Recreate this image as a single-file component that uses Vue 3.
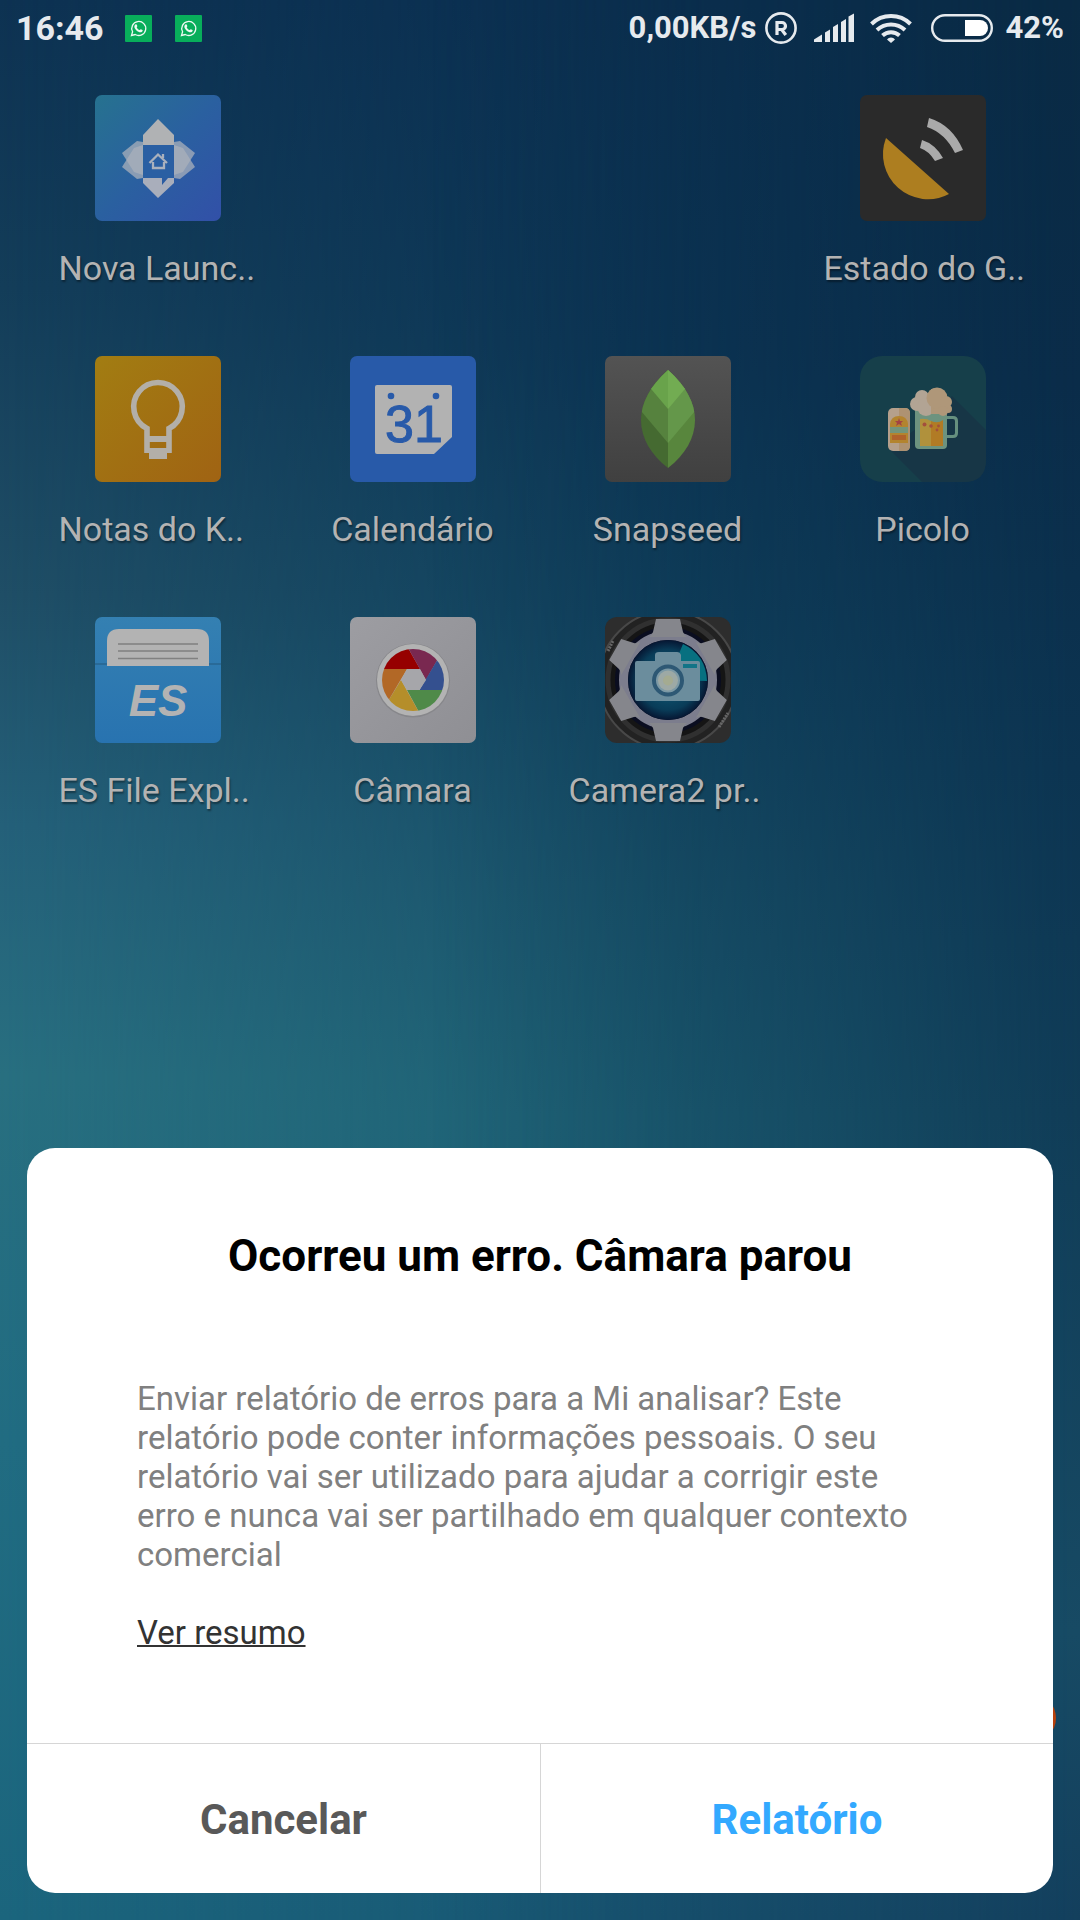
<template>
  <div class="screen">
    <header class="status-bar">
      <span class="clock">{{ clock }}</span>
      <svg v-for="n in 2" :key="n" class="notification" viewBox="0 0 27 27" aria-hidden="true">
        <rect width="27" height="27" rx="1" fill="#08ae5b" />
        <path d="M6.5 20.5 L7.6 16.8 A7 7 0 1 1 10.2 19.5 Z" fill="none" stroke="#eef8f2" stroke-width="1.3" />
        <path d="M10.4 9.4 C11.2 8.8 11.8 9.4 12.3 10.9 C12.4 11.5 11.7 11.8 11.7 12.2 C12.2 13.4 13.3 14.6 14.7 15.1 C15.2 15 15.5 14.2 16 14.3 C17.5 15 17.9 15.3 17.6 16 C17 17.5 15.2 17.7 13.4 16.8 C11.4 15.8 9.9 14 9.4 12.2 C9.2 11 9.6 10 10.4 9.4 Z" fill="#eef8f2" />
      </svg>
      <span class="speed">{{ speed }}</span>
      <svg class="roaming" viewBox="0 0 32 32" aria-hidden="true">
        <circle cx="16" cy="16" r="14.6" fill="none" stroke="#e6eaee" stroke-width="2.6" />
        <path d="M12 23 V10.500 H17 A3.500 3.500 0 0 1 17 17.500 H12 M16.600 17.500 L20.800 23" fill="none" stroke="#e6eaee" stroke-width="3.200" />
      </svg>
      <svg class="signal" viewBox="0 0 40 30" fill="#e6eaee" aria-hidden="true">
        <path d="M0 29 V26.5 L8 21.5 V29 Z" />
        <path d="M11 29 V19.5 L16 16.5 V29 Z" />
        <path d="M19 29 V14 L24 11 V29 Z" />
        <path d="M27 29 V9 L32 6 V29 Z" />
        <path d="M34.5 29 V3.5 L40 0.5 V29 Z" />
      </svg>
      <svg class="wifi" viewBox="0 0 42 30" aria-hidden="true">
        <g fill="none" stroke="#e6eaee" stroke-width="4">
          <path d="M1.5 11 A28 28 0 0 1 40.5 11" />
          <path d="M7 17 A20.5 20.5 0 0 1 35 17" />
          <path d="M12.5 22.5 A12.5 12.5 0 0 1 29.5 22.5" />
        </g>
        <path d="M17 26.5 A5 5 0 0 1 25 26.5 L21 30 Z" fill="#e6eaee" />
      </svg>
      <svg class="battery" viewBox="0 0 62 28" aria-hidden="true">
        <rect x="1.2" y="1.2" width="59.6" height="25.6" rx="12.8" fill="none" stroke="#e6eaee" stroke-width="2.4" />
        <path d="M34 6 H49 A8 8 0 0 1 49 22 H34 Z" fill="#fff" />
      </svg>
      <span class="percent">{{ battery }}</span>
    </header>

    <main class="apps">
      <button v-for="app in apps" :key="app.id" type="button" class="app" :class="{ last: app.lastColumn }">
        <svg class="icon" viewBox="0 0 126 126" aria-hidden="true">
          <template v-if="app.id === 'nova'">
            <defs>
              <linearGradient id="novaBg" x1="0" y1="0" x2="1" y2="1">
                <stop offset="0" stop-color="#26728f" />
                <stop offset="0.5" stop-color="#2a60a0" />
                <stop offset="1" stop-color="#3250a8" />
              </linearGradient>
            </defs>
            <rect width="126" height="126" rx="7" fill="url(#novaBg)" />
            <g fill="#a9b0bb" fill-opacity="0.75">
              <path d="M48 47 L42 46 L27 58 L39 77 L48 80 Z" />
              <path d="M48 83 L42 84 L27 72 L39 53 L48 50 Z" />
              <path d="M79 47 L85 46 L100 58 L88 77 L79 80 Z" />
              <path d="M79 83 L85 84 L100 72 L88 53 L79 50 Z" />
            </g>
            <path d="M63 24 L79 40 V50 H48 V40 Z" fill="#b0b2b4" />
            <path d="M48 83 H67 V90 L73 83 H79 V88 L63 103 L48 88 Z" fill="#a9aebb" />
            <rect x="49" y="50" width="29" height="33" fill="#2a5fa3" />
            <path d="M54.5 68 L63 59.5 L72 68 M68 63 V59 M58 67 V73 H69 V67" fill="none" stroke="#aab1bd" stroke-width="2.3" />
          </template>

          <template v-else-if="app.id === 'gps'">
            <rect width="126" height="126" rx="7" fill="#2a2a2a" />
            <path d="M26 43 A45 45 0 0 0 89 99 Z" fill="#ad7e20" />
            <path d="M69 23 Q92 30 103 55 L95 58 Q85 38 67 32 Z" fill="#aaa" />
            <path d="M62 45 Q75 49 83 63 L75 66 Q69 56 60 53 Z" fill="#aaa" />
          </template>

          <template v-else-if="app.id === 'keep'">
            <defs>
              <linearGradient id="keepBg" x1="0" y1="0" x2="1" y2="1">
                <stop offset="0" stop-color="#a27d12" />
                <stop offset="1" stop-color="#a06313" />
              </linearGradient>
            </defs>
            <rect width="126" height="126" rx="7" fill="url(#keepBg)" />
            <path d="M52 97 V72.5 A24.3 24.3 0 1 1 74 72.5 V97" fill="none" stroke="#b3afa8" stroke-width="5.6" />
            <path d="M50 80 H76 V86 H50 Z M50 92 H76 V97 H72 V103 H54 V97 H50 Z" fill="#b3afa8" />
          </template>

          <template v-else-if="app.id === 'calendar'">
            <rect width="126" height="126" rx="7" fill="#285aa9" />
            <path d="M27 29 H100 Q102 29 102 31 V81 L84 98 H27 Q25 98 25 96 V31 Q25 29 27 29 Z" fill="#b2b2b2" />
            <circle cx="41" cy="40" r="3.3" fill="#285aa9" />
            <circle cx="86" cy="40" r="3.3" fill="#285aa9" />
            <text x="64" y="86" class="day">31</text>
          </template>

          <template v-else-if="app.id === 'snapseed'">
            <defs>
              <linearGradient id="snapBg" x1="0" y1="0" x2="0" y2="1">
                <stop offset="0" stop-color="#535353" />
                <stop offset="1" stop-color="#404040" />
              </linearGradient>
              <clipPath id="leaf">
                <path d="M63 14 C45 30 36 47 36 64 C36 82 46 99 63 112 C80 99 90 82 90 64 C90 47 81 30 63 14 Z" />
              </clipPath>
            </defs>
            <rect width="126" height="126" rx="7" fill="url(#snapBg)" />
            <g clip-path="url(#leaf)">
              <rect x="36" y="14" width="27" height="98" fill="#456a31" />
              <rect x="63" y="14" width="27" height="98" fill="#58863d" />
              <path d="M36 10 H63 V87 L36 55 Z" fill="#56823e" />
              <path d="M90 10 H63 V87 L90 55 Z" fill="#64974a" />
              <path d="M36 10 H63 V53 L36 21 Z" fill="#69a34b" />
              <path d="M90 10 H63 V53 L90 21 Z" fill="#72ac52" />
            </g>
          </template>

          <template v-else-if="app.id === 'picolo'">
            <rect width="126" height="126" rx="22" fill="#163f4a" />
            <path d="M92 40 L126 74 V104 Q126 126 104 126 H62 L29 93 L60 70 Z" fill="#173646" />
            <rect x="28" y="52" width="22" height="43" rx="5" fill="#b5a08c" />
            <path d="M39 52 H45 Q50 52 50 57 V90 Q50 95 45 95 H39 Z" fill="#ae9272" />
            <path d="M30 87 V68 Q31 60 39 60 Q47 60 48 68 V87 Z" fill="#b3842f" />
            <path d="M30 71 H48 V77 H30 Z" fill="#74947a" />
            <path d="M32 79 H46 V84 H32 Z" fill="#b0622b" />
            <path d="M39 62 L40 65 H43 L41 67 L42 70 L39 68 L36 70 L37 67 L35 65 H38 Z" fill="#a34343" />
            <path d="M87 61.5 H93 Q96.5 61.5 96.5 65 V77 Q96.5 80.5 93 80.5 H87" fill="none" stroke="#66907f" stroke-width="3" />
            <path d="M55 54 H87 V89 Q87 93 83 93 H59 Q55 93 55 89 Z" fill="#6d937f" />
            <path d="M60 63 Q66 62 71 65 V90 H60 Z" fill="#b0913c" />
            <path d="M71 65 Q78 68 83 64 V90 H71 Z" fill="#b17b25" />
            <g fill="#a34f3c">
              <circle cx="64.5" cy="68.5" r="2" />
              <circle cx="71" cy="70" r="1.8" />
              <circle cx="78.5" cy="70" r="1.4" />
              <circle cx="77" cy="74" r="1.4" />
            </g>
            <g fill="#b2a494">
              <circle cx="57" cy="48" r="7" />
              <circle cx="62" cy="41" r="7" />
              <circle cx="66" cy="51" r="9" />
            </g>
            <g fill="#af9779">
              <path d="M71 33 H80 V58 H71 Z" />
              <circle cx="77" cy="42" r="10.5" />
              <circle cx="86" cy="46" r="6" />
              <circle cx="88" cy="53" r="4" />
              <circle cx="83" cy="55" r="5" />
            </g>
          </template>

          <template v-else-if="app.id === 'es'">
            <defs>
              <linearGradient id="esBg" x1="0" y1="0" x2="0" y2="1">
                <stop offset="0" stop-color="#3480b2" />
                <stop offset="1" stop-color="#2873b0" />
              </linearGradient>
            </defs>
            <rect width="126" height="126" rx="7" fill="url(#esBg)" />
            <rect y="46" width="126" height="2" fill="#296a98" />
            <path d="M12 49 V24 Q12 12 24 12 H102 Q114 12 114 24 V49 Z" fill="#b3b3b3" />
            <path d="M23 27 H103 M23 34 H103 M23 41.5 H103" stroke="#808080" stroke-width="1.6" />
            <text x="63" y="99" class="es">ES</text>
          </template>

          <template v-else-if="app.id === 'camera'">
            <defs>
              <linearGradient id="camBg" x1="0" y1="0" x2="1" y2="1">
                <stop offset="0" stop-color="#9d9da2" />
                <stop offset="1" stop-color="#8f8f94" />
              </linearGradient>
              <clipPath id="shutter">
                <circle cx="63" cy="63" r="31" />
              </clipPath>
            </defs>
            <rect width="126" height="126" rx="7" fill="url(#camBg)" />
            <circle cx="63" cy="63.5" r="37" fill="#87878b" />
            <circle cx="63" cy="63" r="36" fill="#b3b3b3" />
            <g clip-path="url(#shutter)">
              <path d="M30 52 H70 L57 29 L30 29 Z" fill="#960000" />
              <path d="M57 29 L76 63 L89 40 L80 25 Z" fill="#792850" />
              <path d="M89 40 L69.5 73 H98 V40 Z" fill="#34508f" />
              <path d="M98 73 H57 L70 97 H98 Z" fill="#4f8a49" />
              <path d="M70 97 L51 63 L37 86 L50 97 Z" fill="#b58e2a" />
              <path d="M37 86 L57 52 H28 V86 Z" fill="#b26826" />
            </g>
            <path d="M57 52 H70 L76 63 L69.5 73 H57 L51 63 Z" fill="#a6a6aa" />
          </template>

          <template v-else>
            <defs>
              <clipPath id="lensFrame">
                <rect width="126" height="126" rx="12" />
              </clipPath>
              <radialGradient id="lensGlass">
                <stop offset="0" stop-color="#12617d" />
                <stop offset="0.75" stop-color="#093c58" />
                <stop offset="1" stop-color="#061632" />
              </radialGradient>
            </defs>
            <g clip-path="url(#lensFrame)">
              <rect width="126" height="126" fill="#2d2d2d" />
              <circle cx="63" cy="63" r="69" fill="#222" stroke="#484848" stroke-width="2" />
              <circle cx="63" cy="63" r="60" fill="#151515" stroke="#303030" stroke-width="5" />
              <circle cx="63" cy="63" r="53" fill="#0a0d20" />
              <path d="M3 34 L8 24 M114 110 L123 96" stroke="#666" stroke-width="3" stroke-dasharray="2 1" />
              <circle cx="63" cy="63" r="44.5" fill="none" stroke="#7c7d8d" stroke-width="9" />
              <path v-for="angle in teeth" :key="angle" d="M51 2 H75 L78 15 Q79 18 82 20 H44 Q47 18 48 15 Z" fill="#85868c" :transform="`rotate(${angle} 63 63)`" />
              <circle cx="63" cy="63" r="40" fill="url(#lensGlass)" />
              <path d="M63 63 L78 27 Q101 38 102 64 Z" fill="#077080" />
              <path d="M32 44 H50 V38 Q50 35 54 35 H72 Q75 35 76 38 V44 H93 Q95 44 95 46 V82 Q95 84 93 84 H32 Q30 84 30 82 V46 Q30 44 32 44 Z" fill="#6b8d9d" />
              <rect x="78" y="47" width="14" height="4" fill="#127487" />
              <circle cx="63" cy="63.5" r="14" fill="#7c99a5" stroke="#2d5874" stroke-width="4" />
              <circle cx="63" cy="63.5" r="10" fill="#9da9a5" />
              <circle cx="63" cy="63.5" r="5" fill="#a4ab91" />
            </g>
          </template>
        </svg>
        <span class="label" :class="{ clipped: app.label.endsWith('..') }">{{ app.label }}</span>
      </button>
    </main>

    <div class="dialog-area">
      <span class="bubble"></span>
      <section class="dialog" role="alertdialog" aria-labelledby="dialog-title" aria-describedby="dialog-text">
        <div class="content">
          <h1 id="dialog-title">Ocorreu um erro. Câmara parou</h1>
          <p id="dialog-text">
            Enviar relatório de erros para a Mi analisar? Este relatório pode conter informações pessoais. O seu
            relatório vai ser utilizado para ajudar a corrigir este erro e nunca vai ser partilhado em qualquer
            contexto comercial
          </p>
          <a href="#">Ver resumo</a>
        </div>
        <div class="actions">
          <button type="button">Cancelar</button>
          <button type="button" class="primary">Relatório</button>
        </div>
      </section>
    </div>
  </div>
</template>

<script setup>
import { ref } from 'vue';

const clock = ref('16:46');
const speed = ref('0,00KB/s');
const battery = ref('42%');

const apps = [
  { id: 'nova', label: 'Nova Launc..' },
  { id: 'gps', label: 'Estado do G..', lastColumn: true },
  { id: 'keep', label: 'Notas do K..' },
  { id: 'calendar', label: 'Calendário' },
  { id: 'snapseed', label: 'Snapseed' },
  { id: 'picolo', label: 'Picolo' },
  { id: 'es', label: 'ES File Expl..' },
  { id: 'camera', label: 'Câmara' },
  { id: 'camera2', label: 'Camera2 pr..' },
];

// Rotation of each tooth on the Camera2 gear
const teeth = [0, 60, 120, 180, 240, 300];
</script>

<style>
body {
  margin: 0;
  background: #0c3153;
}
</style>

<style scoped>
.screen {
  position: relative;
  isolation: isolate;
  box-sizing: border-box;
  min-height: 100vh;
  padding-bottom: 27px;
  display: flex;
  flex-direction: column;
  font-family: Roboto, 'Liberation Sans', sans-serif;
  background: linear-gradient(#0b3052, #0c3656 18%, #10425e 32%, #19536a 46%, #1d6074 58%, #1b5c77 80%, #185673);
}

/* Wallpaper: lighter teal on the left edge, darker navy on the right */
.screen::before,
.screen::after {
  content: '';
  position: absolute;
  inset: 0;
  z-index: -1;
}

.screen::before {
  background: linear-gradient(#0d3252, #133d59 15%, #1f4e66 31%, #246079 43%, #286f80 56%, #216c82 75%, #1b657d);
  mask-image: linear-gradient(to right, #000, rgba(0, 0, 0, 0.6) 25%, transparent 65%);
}

.screen::after {
  background: linear-gradient(#092a44, #0a2c49 20%, #0c3451 40%, #103c57 58%, #174a64 85%, #133f5d);
  mask-image: linear-gradient(to left, #000, rgba(0, 0, 0, 0.6) 22%, transparent 60%);
}

.status-bar {
  display: flex;
  align-items: center;
  height: 56px;
  padding: 0 16px;
  color: #e6eaee;
  font-weight: 700;
  line-height: 40px;
}

.clock {
  margin-right: 21px;
  font-size: 34px;
}

.notification {
  width: 27px;
  height: 27px;
  margin-right: 23px;
}

.speed {
  margin-left: auto;
  font-size: 31px;
}

.roaming {
  width: 32px;
  height: 32px;
  margin-left: 8px;
}

.signal {
  width: 40px;
  height: 30px;
  margin-left: 17px;
}

.wifi {
  width: 42px;
  height: 30px;
  margin-left: 16px;
}

.battery {
  width: 62px;
  height: 28px;
  margin-left: 19px;
}

.percent {
  margin-left: 13px;
  font-size: 31px;
}

.apps {
  display: grid;
  grid-template-columns: repeat(4, 1fr);
  row-gap: 68px;
  padding: 39px 30px 60px;
}

.app {
  display: flex;
  flex-direction: column;
  align-items: center;
  gap: 27px;
  padding: 0;
  border: 0;
  background: none;
  font-family: inherit;
}

.app.last {
  grid-column: 4;
}

.icon {
  display: block;
  width: 126px;
  height: 126px;
}

.day {
  font-family: 'Liberation Sans', sans-serif;
  font-size: 52px;
  text-anchor: middle;
  fill: #285aa9;
  stroke: #285aa9;
  stroke-width: 1px;
}

.es {
  font-family: 'Liberation Sans', sans-serif;
  font-size: 44px;
  font-weight: 700;
  font-style: italic;
  text-anchor: middle;
  fill: #b3b3b3;
}

.label {
  width: 198px;
  color: #b3b3b3;
  font-size: 34px;
  line-height: 40px;
  text-align: center;
  text-shadow: 1px 2px 2px rgba(0, 0, 0, 0.4);
  white-space: nowrap;
}

.label.clipped {
  text-align: left;
}

.dialog-area {
  position: relative;
  margin: auto 27px 0;
}

.bubble {
  position: absolute;
  right: -3px;
  bottom: 150px;
  width: 50px;
  height: 50px;
  border-radius: 50%;
  background: #b8400c;
}

.dialog {
  position: relative;
  overflow: hidden;
  border-radius: 28px;
  background: #fff;
}

.content {
  padding: 81px 110px 91px;
  font-size: 33px;
  line-height: 39px;
}

h1 {
  margin: 0 0 96px;
  color: #000;
  font-size: 44px;
  font-weight: 700;
  line-height: 54px;
  text-align: center;
}

p {
  margin: 0 0 39px;
  color: #808080;
}

a {
  color: #333;
  text-decoration-thickness: 2px;
}

.actions {
  display: grid;
  grid-template-columns: 1fr 1fr;
  border-top: 1px solid #d6d6d6;
}

.actions button {
  height: 149px;
  padding: 2px 0 0;
  border: 0;
  background: none;
  color: #595959;
  font-family: inherit;
  font-size: 42px;
  font-weight: 700;
}

.actions .primary {
  border-left: 1px solid #d6d6d6;
  color: #33a9ff;
}
</style>
